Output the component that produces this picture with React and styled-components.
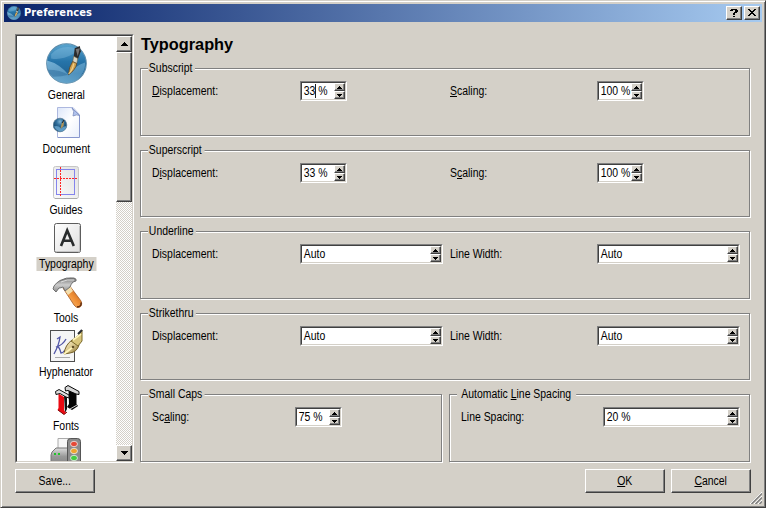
import React from "react";
import styled, { createGlobalStyle } from "styled-components";

const GlobalStyle = createGlobalStyle`
  * { box-sizing: border-box; }
  body { margin: 0; background: #d4d0c8; overflow: hidden; }
`;

const face = "#d4d0c8";
const raised = `
  border: 1px solid;
  border-color: #fff #404040 #404040 #fff;
  box-shadow: inset -1px -1px 0 #808080;
`;
const narrow = "transform: scaleX(0.87);";

const Window = styled.div`
  width: 766px;
  height: 508px;
  padding: 3px;
  display: flex;
  flex-direction: column;
  background: ${face};
  border: 1px solid;
  border-color: ${face} #404040 #404040 ${face};
  box-shadow: inset 1px 1px 0 #fff, inset -1px -1px 0 #808080;
  font: 12px/14px "Liberation Sans", Arial, sans-serif;
  color: #000;
  cursor: default;
`;

const TitleBar = styled.header`
  height: 18px;
  flex: none;
  display: flex;
  align-items: center;
  padding: 0 2px 0 3px;
  background: linear-gradient(to right, #0a246a, #a6caf0);
`;

const Title = styled.h1`
  flex: 1;
  margin: 0 0 0 3px;
  font: bold 11px/18px "DejaVu Sans Condensed", "DejaVu Sans", sans-serif;
  font-stretch: condensed;
  letter-spacing: 0.1px;
  color: #fff;
`;

const TitleButton = styled.button`
  width: 16px;
  height: 14px;
  margin-left: 2px;
  padding: 0;
  display: grid;
  place-items: center;
  background: ${face};
  ${raised}
`;

const Body = styled.div`
  height: 429px;
  margin-top: 12px;
  padding: 0 12px 0 11px;
  display: flex;
  gap: 6px;
`;

const ListBox = styled.nav`
  width: 119px;
  display: flex;
  background: #fff;
  border: 1px solid;
  border-color: #808080 #fff #fff #808080;
`;

const ListInner = styled.div`
  flex: 1;
  display: flex;
  overflow: hidden;
  border: 1px solid;
  border-color: #404040 ${face} ${face} #404040;
`;

const Items = styled.div`
  width: 99px;
  height: 425px;
  overflow: hidden;
  display: flex;
  flex-direction: column;
`;

const Item = styled.div`
  flex: none;
  display: flex;
  flex-direction: column;
  align-items: center;
`;

const IconSlot = styled.div`
  height: ${(p) => p.$height}px;
  padding-top: ${(p) => p.$top}px;
  margin-left: ${(p) => p.$shift || 0}px;
  svg { display: block; }
`;

const ItemLabel = styled.span`
  height: 14px;
  padding: 0 3px;
  background: ${(p) => (p.$selected ? face : "transparent")};
  ${narrow}
`;

const ScrollBar = styled.div`
  width: 16px;
  display: flex;
  flex-direction: column;
  background: repeating-conic-gradient(#fff 0 25%, ${face} 0 50%) 0 0 / 2px 2px;
`;

const ScrollButton = styled.button`
  width: 16px;
  height: 16px;
  padding: 0;
  display: grid;
  place-items: center;
  background: ${face};
  ${raised}
`;

const Thumb = styled.div`
  height: 150px;
  margin-bottom: auto;
  background: ${face};
  ${raised}
`;

const Panel = styled.main`
  flex: 1;
  display: flex;
  flex-direction: column;
`;

const Heading = styled.h2`
  height: 34px;
  margin: 0;
  padding-left: 1px;
  font: bold 17px/22px "Liberation Sans", Arial, sans-serif;
  transform: scaleX(0.96);
  transform-origin: left;
`;

const Groups = styled.div`
  display: flex;
  flex-direction: column;
  gap: 14px;
`;

const GroupRow = styled.div`
  display: grid;
  grid-template-columns: 302px 301px;
  gap: 7px;
`;

const GroupBox = styled.section`
  width: ${(p) => p.$width || 610}px;
  height: ${(p) => p.$height}px;
  border: 1px solid #808080;
  box-shadow: 1px 1px 0 #fff, inset 1px 1px 0 #fff;
`;

const Legend = styled.div`
  width: fit-content;
  height: 14px;
  margin: -8px 0 0 7px;
  padding: 0 ${(p) => (p.$pad ? 6 : 3)}px 0 ${(p) => (p.$pad ? 5 : 1)}px;
  background: ${face};
  transform-origin: left;
  ${narrow}
`;

const Fields = styled.div`
  display: grid;
  grid-template-columns: ${(p) => p.$columns};
  align-items: center;
  height: 20px;
  margin: 6px 0 0 11px;
`;

const FieldLabel = styled.label`
  white-space: nowrap;
  transform-origin: left;
  ${narrow}
`;

const Spin = styled.div`
  width: ${(p) => p.$width}px;
  height: 20px;
  display: flex;
  background: #fff;
  border: 1px solid;
  border-color: #808080 #fff #fff #808080;
`;

const SpinInner = styled.div`
  flex: 1;
  min-width: 0;
  display: flex;
  border: 1px solid;
  border-color: #404040 ${face} ${face} #404040;
`;

const Value = styled.span`
  flex: 1 1 0;
  width: 0;
  min-width: 0;
  display: flex;
  padding-left: 2px;
  line-height: 16px;
  white-space: pre;
  transform-origin: left;
  ${narrow}
`;

const Caret = styled.i`
  flex: none;
  width: 1.15px;
  height: 14px;
  margin: 1px -0.65px 0 -0.5px;
  background: #000;
`;

const Steps = styled.div`
  flex: none;
  width: 11px;
  display: flex;
  flex-direction: column;
`;

const Step = styled.button`
  width: 11px;
  height: 8px;
  padding: 0;
  display: grid;
  place-items: center;
  background: ${face};
  ${raised}
`;

const Footer = styled.footer`
  display: flex;
  gap: 6px;
  margin-top: 6px;
  padding: 0 0 0 11px;
`;

const PushButton = styled.button`
  width: 80px;
  height: 24px;
  margin-right: ${(p) => (p.$spread ? "auto" : "0")};
  padding: 0 1px 1px 0;
  background: ${face};
  color: #000;
  font: inherit;
  ${raised}
`;

const ButtonText = styled.span`
  display: inline-block;
  ${narrow}
`;

const Grip = styled.div`
  width: 12px;
  height: 12px;
  margin: 23px 0 0 -7px;
  svg { display: block; }
`;

const Arrow = ({ down, size = 7 }) => {
  const h = (size + 1) / 2;
  return (
    <svg width={size} height={h} shapeRendering="crispEdges">
      {Array.from({ length: h }, (_, i) => (
        <rect key={i} x={h - 1 - i} y={down ? h - 1 - i : i} width={2 * i + 1} height="1" />
      ))}
    </svg>
  );
};

const Globe = ({ size, id }) => (
  <svg width={size} height={size} viewBox="0 0 40 40">
    <defs>
      <linearGradient id={id} x1="0" y1="0" x2="0" y2="1">
        <stop offset="0" stopColor="#5ba6d0" />
        <stop offset=".45" stopColor="#2674a9" />
        <stop offset=".75" stopColor="#206496" />
        <stop offset="1" stopColor="#75b3d5" />
      </linearGradient>
      <linearGradient id={id + "w"} x1="0" y1="0" x2="1" y2="1">
        <stop offset="0" stopColor="#8fc3e2" />
        <stop offset="1" stopColor="#4b91be" />
      </linearGradient>
    </defs>
    <circle cx="20" cy="20" r="19.3" fill={`url(#${id})`} stroke="#5d8ba9" strokeWidth="1" />
    <path d="M1 17Q13 20 22 31Q28 22 38 19Q39 28 31 35Q20 42 8 35Q0 27 1 17Z" fill={`url(#${id}w)`} opacity=".75" />
    <path d="M2 26Q14 26 22 31Q15 33 7 33Q3 30 2 26Z" fill="#205f92" opacity=".4" />
    <path d="M5 11Q14 1 29 5Q31 8 26 11Q15 17 5 15Z" fill="#8ec7e5" opacity=".35" />
    <path d="M28 5L33 3L34 8L31 16L27 14Z" fill="#292a2c" />
    <path d="M29 6L33 5L31 13Z" fill="#777" />
    <path d="M27 13L31 15L30 20L26 19Z" fill="#d8d5c4" stroke="#6c6140" strokeWidth=".5" />
    <path d="M26 18L30 20Q29 26 22 31Q22 24 26 18Z" fill="#d2a350" stroke="#513b1b" strokeWidth=".7" />
    <path d="M27 20Q26 27 22 30" stroke="#f2d08a" strokeWidth="1.2" fill="none" />
  </svg>
);

const DocumentIcon = () => (
  <svg width="28" height="32" viewBox="0 0 28 32">
    <defs>
      <linearGradient id="paper" x1="0" y1="0" x2="1" y2="1">
        <stop offset="0" stopColor="#dce6fa" /><stop offset=".5" stopColor="#fff" /><stop offset="1" stopColor="#e8eefb" />
      </linearGradient>
      <radialGradient id="ball" cx=".5" cy=".25">
        <stop offset="0" stopColor="#83b5d3" /><stop offset=".5" stopColor="#33719e" /><stop offset="1" stopColor="#1c5279" />
      </radialGradient>
    </defs>
    <path d="M4.5 .5H20L26.5 7.5V30.5H4.5Z" fill="url(#paper)" stroke="#adb8df" />
    <path d="M26.5 30.5H5M26.5 8V30" stroke="#8897ce" fill="none" />
    <path d="M19 1Q22 4 20 9Q24 7 26.5 8.5Z" fill="#afc2ed" stroke="#7689bd" strokeWidth=".8" />
    <circle cx="7" cy="18" r="6.8" fill="url(#ball)" stroke="#55748d" strokeWidth=".7" />
    <path d="M1 19.5Q5 18 8 21.5Q11 18.5 13.6 19.5Q12 24.5 7 24.5Q3 23.5 1 19.5Z" fill="#5d99c2" />
    <path d="M7.5 22L8.5 17L11 14L10.5 19Z" fill="#b39455" />
    <path d="M9 16L11 13" stroke="#222" />
  </svg>
);

const GuidesIcon = () => (
  <svg width="28" height="34" viewBox="0 0 28 34">
    <defs>
      <linearGradient id="sheet" x1="1" y1="0" x2="0" y2="1">
        <stop offset="0" stopColor="#e2e2e2" /><stop offset="1" stopColor="#fafafa" />
      </linearGradient>
    </defs>
    <rect x=".5" y=".5" width="25" height="32" rx="2" fill="url(#sheet)" stroke="#c6c6c6" />
    <path d="M2 32.5H24" stroke="#aaa" />
    <rect x="3.5" y="3.5" width="18" height="25" fill="none" stroke="#8484ec" />
    <path d="M7.5 1V31M1 12.5H25" stroke="#ff2424" strokeDasharray="2 1" fill="none" />
  </svg>
);

const TypographyIcon = () => (
  <svg width="28" height="31" viewBox="0 0 28 31">
    <defs>
      <linearGradient id="tile" x1="0" y1="0" x2="1" y2="1">
        <stop offset="0" stopColor="#fff" /><stop offset="1" stopColor="#dedede" />
      </linearGradient>
    </defs>
    <rect x=".5" y=".5" width="26" height="29" rx="2" fill="url(#tile)" stroke="#5d5d5d" />
    <path d="M2 28.5H25.5V3" stroke="#c4c4c4" fill="none" />
    <path d="M7 23L13.2 7.5L19.8 23M9 17.8H18" fill="none" stroke="#292c2d" strokeWidth="2.6" />
  </svg>
);

const HammerIcon = () => (
  <svg width="32" height="32" viewBox="0 0 32 32">
    <defs>
      <linearGradient id="wood" x1="0" y1="1" x2="1" y2="0">
        <stop offset="0" stopColor="#f9cf91" /><stop offset=".5" stopColor="#f19137" /><stop offset="1" stopColor="#ab4e10" />
      </linearGradient>
      <linearGradient id="steel" x1="0" y1="0" x2="0" y2="1">
        <stop offset="0" stopColor="#777" /><stop offset=".5" stopColor="#ccc" /><stop offset="1" stopColor="#8b8b8b" />
      </linearGradient>
    </defs>
    <path d="M11 11L17 8L29 24Q31 29 27 30.5Q24 31 22 28Z" fill="url(#wood)" stroke="#a55b24" strokeWidth=".8" />
    <path d="M12 12L18 9L21 14L16 18Z" fill="#f3dfaf" />
    <path d="M25 30Q30 29.5 29 25.5" fill="none" stroke="#5a2b12" strokeWidth="1.5" />
    <path d="M8 3.5Q14 0 22 1Q25 2 24 4L21 5Q19 7 18 10L13 14L11 10Q9 11 7 11L4 15L1 12L2 9Q4 6 8 3.5Z" fill="url(#steel)" stroke="#666" strokeWidth=".9" />
    <path d="M9 5Q15 2 22 3" fill="none" stroke="#ddd" strokeWidth="1" />
  </svg>
);

const HyphenatorIcon = () => (
  <svg width="33" height="34" viewBox="0 0 33 34">
    <defs>
      <linearGradient id="nib" x1="0" y1="0" x2="1" y2="1">
        <stop offset="0" stopColor="#fff8d5" /><stop offset=".5" stopColor="#dac78d" /><stop offset="1" stopColor="#765f24" />
      </linearGradient>
    </defs>
    <rect x=".5" y="1.5" width="24" height="31" fill="#f5f5f5" stroke="#4e4e4e" />
    <path d="M5 28.5H20" stroke="#aaa" />
    <path d="M7 10L10 8Q9 16 4 25M16 10Q13 16 6 18Q9 16 11 24Q13 24 15 21" fill="none" stroke="#5256a6" strokeWidth="1.3" />
    <path d="M14 25Q15 16 22 11L29 16Q27 23 20 24Z" fill="url(#nib)" stroke="#74602a" />
    <path d="M21 12L29 6L32 1V12L28 17Z" fill="#d9c67c" stroke="#7b6a2b" />
    <path d="M23 11L31 5M14 25L23 18" stroke="#fff5bb" strokeWidth="1.6" />
    <path d="M28 5L32 1" stroke="#292d34" strokeWidth="2" />
    <circle cx="23" cy="18" r="1.3" fill="#604f28" />
  </svg>
);

const FontsIcon = () => (
  <svg width="25" height="31" viewBox="0 0 25 31">
    <path d="M13.5 5L21.5 8V19L23 21L17 25L12 22L14 19Z" fill="#050505" />
    <path d="M10 2.5L13 .5L24 6.5V9.5L21 9L13 5.5L10.5 6Z" fill="#d5d5d5" stroke="#050505" strokeWidth="1" />
    <path d="M15 24L22 20" stroke="#ccc" strokeWidth="1" />
    <path d="M9 11H12V24L10 28Z" fill="#111" />
    <path d="M3.5 8.5L9 12V25L11 28L9 29.5L2.5 25L3.5 23Z" fill="#eb0a12" />
    <path d="M3 25L9 29.5L12 27" fill="none" stroke="#7e0a0a" strokeWidth="1" />
    <path d="M.5 6.5L4 4.5L14 10V13L11 12L5 8.5L1 9.5Z" fill="#ddd" stroke="#111" strokeWidth="1" />
  </svg>
);

const PreflightIcon = () => (
  <svg width="32" height="32" viewBox="0 0 32 32">
    <defs>
      <linearGradient id="printer" x1="0" y1="0" x2="0" y2="1">
        <stop offset="0" stopColor="#ddd" /><stop offset=".4" stopColor="#999" /><stop offset="1" stopColor="#777" />
      </linearGradient>
    </defs>
    <path d="M8 .5H24V14H8Z" fill="#f7f7f7" stroke="#aaa" />
    <path d="M2 14L6 10H26L30 15V31H1V17Z" fill="url(#printer)" stroke="#777" />
    <rect x="17.5" y=".5" width="13" height="30" rx="3" fill="#8b8b8b" stroke="#555" />
    <g stroke="#eee" strokeWidth=".8">
      <ellipse cx="24" cy="6" rx="3.5" ry="2.7" fill="#e54936" />
      <ellipse cx="24" cy="13" rx="3.5" ry="2.7" fill="#eea52e" />
      <ellipse cx="24" cy="20" rx="3.5" ry="2.7" fill="#43cc42" />
    </g>
    <path d="M4 16H6M8 16H10" stroke="#23c42b" strokeWidth="2" />
  </svg>
);

const sections = [
  { name: "General", height: 52, top: 7, icon: <Globe size={41} id="globe" /> },
  { name: "Document", height: 40, top: 5, shift: 1, icon: <DocumentIcon /> },
  { name: "Guides", height: 47, top: 10, shift: 1, icon: <GuidesIcon /> },
  { name: "Typography", height: 40, top: 6, shift: 3, icon: <TypographyIcon />, selected: true },
  { name: "Tools", height: 40, top: 6, shift: 3, icon: <HammerIcon /> },
  { name: "Hyphenator", height: 40, top: 4, icon: <HyphenatorIcon /> },
  { name: "Fonts", height: 40, top: 6, shift: 2, icon: <FontsIcon /> },
  { name: "", height: 40, top: 5, shift: -1, icon: <PreflightIcon /> },
];

const SpinBox = ({ width, value, caretAfter }) => (
  <Spin $width={width}>
    <SpinInner>
      <Value>
        {caretAfter ? <>{caretAfter}<Caret /></> : null}{value}
      </Value>
      <Steps>
        <Step aria-label="Increase"><Arrow size={5} /></Step>
        <Step aria-label="Decrease"><Arrow size={5} down /></Step>
      </Steps>
    </SpinInner>
  </Spin>
);

const columns = "148px 150px 147px auto";

export default function App() {
  return (
    <>
      <GlobalStyle />
      <Window>
        <TitleBar>
          <Globe size={14} id="small" />
          <Title>Preferences</Title>
          <TitleButton aria-label="Help">
            <svg width="8" height="10" shapeRendering="crispEdges">
              <path d="M1 1h6v1H1zM0 2h3v1H0zM5 2h3v2H5zM4 4h3v1H4zM3 5h2v2H3zM3 8h2v1H3z" />
            </svg>
          </TitleButton>
          <TitleButton aria-label="Close">
            <svg width="8" height="8" shapeRendering="crispEdges">
              <path d="M0 0h2v1h1v1h2v-1h1v-1h2v1h-1v1h-1v1h-1v1h1v1h1v1h1v1h-2v-1h-1v-1h-2v1h-1v1h-2v-1h1v-1h1v-1h1v-1h-1v-1h-1v-1h-1z" />
            </svg>
          </TitleButton>
        </TitleBar>
        <Body>
          <ListBox>
            <ListInner>
              <Items>
                {sections.map((s) => (
                  <Item key={s.name}>
                    <IconSlot $height={s.height} $top={s.top} $shift={s.shift}>{s.icon}</IconSlot>
                    <ItemLabel $selected={s.selected}>{s.name}</ItemLabel>
                  </Item>
                ))}
              </Items>
              <ScrollBar>
                <ScrollButton aria-label="Scroll up"><Arrow /></ScrollButton>
                <Thumb />
                <ScrollButton aria-label="Scroll down"><Arrow down /></ScrollButton>
              </ScrollBar>
            </ListInner>
          </ListBox>
          <Panel>
            <Heading>Typography</Heading>
            <Groups>
              <GroupBox $height={68}>
                <Legend>Subscript</Legend>
                <Fields $columns={columns}>
                  <FieldLabel><u>D</u>isplacement:</FieldLabel>
                  <SpinBox width={47} caretAfter="33" value=" %" />
                  <FieldLabel><u>S</u>caling:</FieldLabel>
                  <SpinBox width={47} value="100 %" />
                </Fields>
              </GroupBox>
              <GroupBox $height={67}>
                <Legend>Superscript</Legend>
                <Fields $columns={columns}>
                  <FieldLabel>D<u>i</u>splacement:</FieldLabel>
                  <SpinBox width={47} value="33 %" />
                  <FieldLabel>S<u>c</u>aling:</FieldLabel>
                  <SpinBox width={47} value="100 %" />
                </Fields>
              </GroupBox>
              <GroupBox $height={68}>
                <Legend>Underline</Legend>
                <Fields $columns={columns}>
                  <FieldLabel>Displacement:</FieldLabel>
                  <SpinBox width={143} value="Auto" />
                  <FieldLabel>Line Width:</FieldLabel>
                  <SpinBox width={143} value="Auto" />
                </Fields>
              </GroupBox>
              <GroupBox $height={67}>
                <Legend>Strikethru</Legend>
                <Fields $columns={columns}>
                  <FieldLabel>Displacement:</FieldLabel>
                  <SpinBox width={143} value="Auto" />
                  <FieldLabel>Line Width:</FieldLabel>
                  <SpinBox width={143} value="Auto" />
                </Fields>
              </GroupBox>
              <GroupRow>
                <GroupBox $width={302} $height={68}>
                  <Legend>Small Caps</Legend>
                  <Fields $columns="143px auto">
                    <FieldLabel>Sc<u>a</u>ling:</FieldLabel>
                    <SpinBox width={47} value="75 %" />
                  </Fields>
                </GroupBox>
                <GroupBox $width={301} $height={68}>
                  <Legend $pad>Automatic <u>L</u>ine Spacing</Legend>
                  <Fields $columns="142px auto">
                    <FieldLabel>Line Spacing:</FieldLabel>
                    <SpinBox width={137} value="20 %" />
                  </Fields>
                </GroupBox>
              </GroupRow>
            </Groups>
          </Panel>
        </Body>
        <Footer>
          <PushButton $spread><ButtonText>Save...</ButtonText></PushButton>
          <PushButton><ButtonText><u>O</u>K</ButtonText></PushButton>
          <PushButton><ButtonText><u>C</u>ancel</ButtonText></PushButton>
          <Grip>
            <svg width="12" height="12">
              <path d="M0 12L12 0M4 12L12 4M8 12L12 8" stroke="#fff" fill="none" />
              <path d="M1.5 12L12 1.5M5.5 12L12 5.5M9.5 12L12 9.5" stroke="#808080" strokeWidth="1.5" fill="none" />
            </svg>
          </Grip>
        </Footer>
      </Window>
    </>
  );
}
